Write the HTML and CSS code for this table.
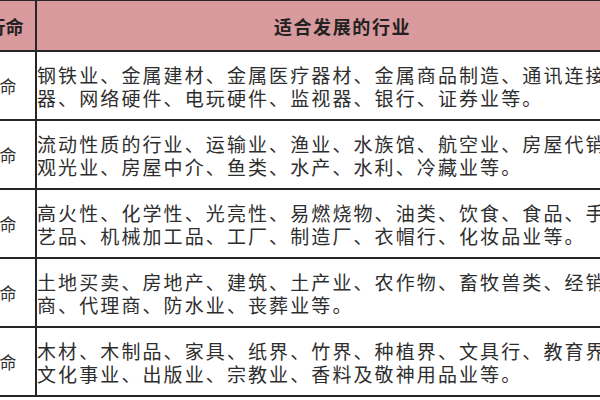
FILE: index.html
```html
<!DOCTYPE html>
<html lang="zh">
<head>
<meta charset="utf-8">
<title>五行适合发展的行业</title>
<link rel="stylesheet" href="styles.css">
</head>
<body>
<table class="industry">
  <colgroup><col class="c-type"><col class="c-list"></colgroup>
  <thead>
    <tr class="head"><th class="head-type">五行命</th><th>适合发展的行业</th></tr>
  </thead>
  <tbody>
    <tr><td class="type">金命</td><td class="list">钢铁业、金属建材、金属医疗器材、金属商品制造、通讯连接机<br>器、网络硬件、电玩硬件、监视器、银行、证券业等。</td></tr>
    <tr><td class="type">水命</td><td class="list">流动性质的行业、运输业、渔业、水族馆、航空业、房屋代销、<br>观光业、房屋中介、鱼类、水产、水利、冷藏业等。</td></tr>
    <tr><td class="type">火命</td><td class="list">高火性、化学性、光亮性、易燃烧物、油类、饮食、食品、手工<br>艺品、机械加工品、工厂、制造厂、衣帽行、化妆品业等。</td></tr>
    <tr><td class="type">土命</td><td class="list">土地买卖、房地产、建筑、土产业、农作物、畜牧兽类、经销<br>商、代理商、防水业、丧葬业等。</td></tr>
    <tr><td class="type">木命</td><td class="list">木材、木制品、家具、纸界、竹界、种植界、文具行、教育界、<br>文化事业、出版业、宗教业、香料及敬神用品业等。</td></tr>
  </tbody>
</table>
</body>
</html>
```

FILE: styles.css
```css
html, body {
  margin: 0;
  padding: 0;
  background: #ffffff;
  overflow: hidden;
  width: 600px;
  height: 400px;
}

.industry {
  border-collapse: collapse;
  table-layout: fixed;
  width: 686px;
  margin-left: -38px;
  margin-top: -1px;
  font-family: "Noto Sans CJK SC", sans-serif;
  color: #2e2e2e;
}

.c-type { width: 73px; }
.c-list { width: 613px; }

.industry th,
.industry td {
  border: 2px solid #262626;
  padding: 0;
}

.head th {
  background: #d99a9e;
  height: 49px;
  font-size: 18px;
  font-weight: 700;
  color: #222222;
  text-align: center;
  letter-spacing: 1.6px;
  line-height: 22px;
}

.head .head-type {
  letter-spacing: 0;
  padding-right: 6px;
}

.type {
  text-align: center;
  font-size: 17px;
  height: 67px;
  line-height: 22px;
}

.list {
  white-space: nowrap;
  font-size: 19px;
  letter-spacing: 2.1px;
  line-height: 23px;
  padding-left: 9px;
  vertical-align: middle;
}
```
